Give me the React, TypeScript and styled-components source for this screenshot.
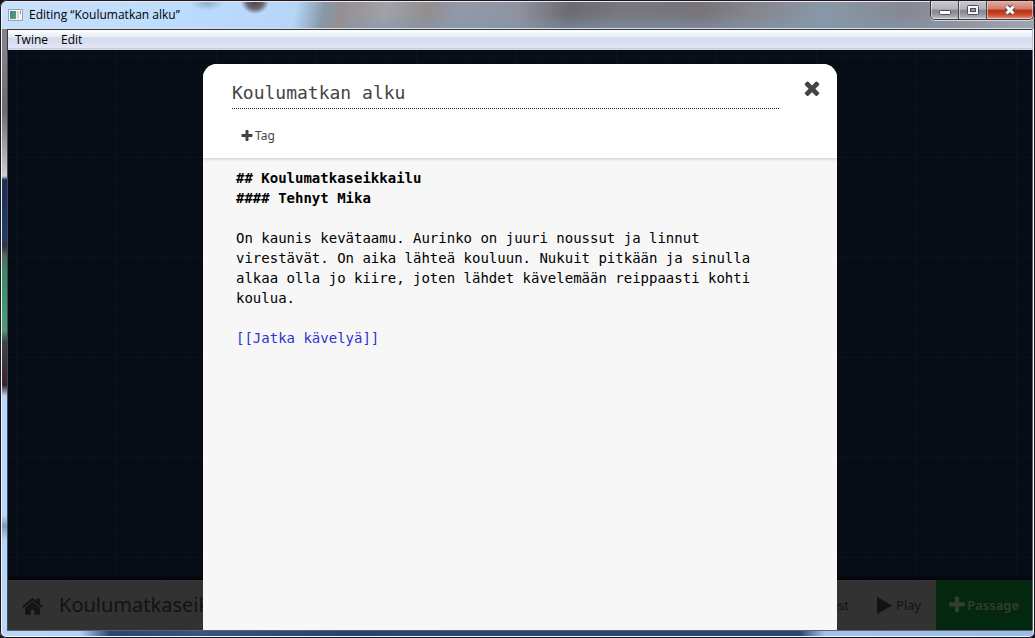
import React from 'react';
import styled, { createGlobalStyle } from 'styled-components';

const mono = `'DejaVu Sans Mono', 'Liberation Mono', monospace`;
const sans = `'Noto Sans', 'Open Sans', sans-serif`;

const GlobalStyle = createGlobalStyle`
  *, *::before, *::after { box-sizing: border-box; }
  body { margin: 0; font-family: ${sans}; background: #15121a; }
  button, input { font: inherit; color: inherit; }
  button { margin: 0; padding: 0; border: 0; background: none; cursor: pointer; }
`;

const WindowFrame = styled.div`
  display: flex;
  flex-direction: column;
  min-height: 100vh;
  padding: 1px 2px 8px 7px;
  border-radius: 7px 7px 6px 6px;
  box-shadow: inset 0 0 0 1px #1b1820, inset 0 0 0 2px #eef4fb;
  background:
    linear-gradient(90deg, #bbd8fa 0, #b4d2f6 80px, #2a4572 110px, #3a5382 200px, #284474 340px, #2c4674 800px, #a4c3ec 825px, #9bbce8 100%) bottom / 100% 8px no-repeat,
    linear-gradient(#858087 0, #858087 50px, #6d696f 110px, #d2cecd 176px, #1b2c50 180px, #233a6c 236px, #35343c 246px, #606560 256px, #3e8562 268px, #4d9c75 330px, #44404a 342px, #3a2526 385px, #b8d7fa 396px, #bbd9fb 515px, #8199b8 526px, #b5d4f8 540px, #bbd9fb 100%) left / 8px 100% no-repeat,
    linear-gradient(#9eaab8 0, #c9dce8 80px, #8078ae 98px, #c3d2df 130px, #eeebee 177px, #8fafd2 179px, #b6d2f1 400px, #bfdaf7 100%) right / 5px 100% no-repeat,
    #8d929f;
`;

const TitleBar = styled.header`
  display: flex;
  align-items: flex-start;
  height: 28px;
  margin: 0 -1px 0 -5px;
  padding-left: 6px;
  border-top: 1px solid #eee8ee;
  border-radius: 6px 6px 0 0;
  background:
    radial-gradient(ellipse 14px 12px at 253px 0, #514652 0, #6b616f 55%, transparent 100%),
    radial-gradient(ellipse 16px 8px at 205px 1px, #91adcb 0, transparent 100%),
    linear-gradient(transparent 40%, #8398ad88 100%) 345px 0 / 600px 100% no-repeat,
    linear-gradient(100deg, #c8e0fa 0, #bcdcfd 180px, #b7d6f7 290px, #8698ac 318px, #958f91 335px, #a1a2a9 380px, #918e8d 420px, #9299ab 450px, #8e939f 510px, #6c6971 560px, #77777f 610px, #77747a 690px, #85858c 740px, #8898a8 810px, #858993 890px, #a1a5b0 100%);
`;

const AppIcon = styled.svg`
  flex: none;
  width: 15px;
  height: 12px;
  margin: 7px 6px 0 0;
`;

const WindowTitle = styled.h1`
  flex: 1;
  margin: 4px 0 0;
  font: 400 12px/18px 'Open Sans', sans-serif;
  color: #000;
`;

const WindowControls = styled.div`
  display: flex;
  height: 19px;
  margin-top: -1px;
  border: 1px solid #35353d;
  border-top: 0;
  border-radius: 0 0 5px 5px;
  overflow: hidden;
  box-shadow: 0 1px 0 #d6d9e0;
`;

const ControlButton = styled.button<{ $close?: boolean }>`
  display: grid;
  place-items: center;
  width: ${p => (p.$close ? 46 : 28)}px;
  border: 1px solid #ffffff77;
  border-radius: ${p => (p.$close ? '0 0 4px 0' : '0')};
  background: ${p =>
    p.$close
      ? 'linear-gradient(#e0a79c 0, #cf7a6a 45%, #b8301a 50%, #c94125 75%, #e08061 100%)'
      : 'linear-gradient(#c6c5ca 0, #b1b1b7 45%, #85868f 50%, #91939e 75%, #b5b8c3 100%)'};
  & + & { box-shadow: -1px 0 0 #45434b; }
`;

const MenuBar = styled.nav`
  display: flex;
  height: 21px;
  margin-right: 1px;
  padding-left: 1px;
  border: solid #34373e;
  border-width: 1px 0 0 1px;
  box-shadow: 0 -1px 0 #d5e2ea;
  background: linear-gradient(#fff 0, #e6eaf4 7px, #d4daec 8px, #e2e7f6 18px, #b3b9cb 19px, #f5f6fb 20px);
`;

const MenuItem = styled.button`
  padding: 0 6px;
  margin-right: 1px;
  font: 400 12px/20px 'Open Sans', sans-serif;
  color: #000;
`;

const AppView = styled.main`
  position: relative;
  display: flex;
  flex: 1;
  flex-direction: column;
  margin-right: 1px;
  border-left: 1px solid #414a58;
  box-shadow: 1px 0 0 #59636f, 0 1px 0 #59636f;
`;

const StoryMap = styled.div`
  flex: 1;
  background:
    linear-gradient(transparent, #02050a) bottom / 100% 6px no-repeat,
    linear-gradient(90deg, #0a121c 1px, transparent 1px) 8px 0 / 100px 100px,
    linear-gradient(#0a121c 1px, transparent 1px) 0 7px / 100px 100px,
    linear-gradient(90deg, #070e18 1px, transparent 1px) 8px 0 / 25px 25px,
    linear-gradient(#070e18 1px, transparent 1px) 0 7px / 25px 25px,
    #060d17;
`;

const StoryToolbar = styled.footer`
  display: flex;
  align-items: stretch;
  height: 50px;
  background: #323232;
  color: #121212;
`;

const HomeLink = styled.a`
  display: flex;
  align-items: center;
  padding: 2px 15px 0 13px;
  color: #151515;
`;

const StoryName = styled.button`
  flex: 1;
  font: 400 20px/50px ${sans};
  text-align: left;
`;

const ToolButton = styled.button<{ $primary?: boolean }>`
  display: flex;
  align-items: center;
  gap: ${p => (p.$primary ? 0 : 2)}px;
  padding: 0 ${p => (p.$primary ? 13 : 15)}px 0 11px;
  font: ${p => (p.$primary ? 600 : 400)} 13px/50px ${sans};
  color: ${p => (p.$primary ? '#323d34' : '#121212')};
  background: ${p => (p.$primary ? '#04280f' : 'transparent')};
`;

const Overlay = styled.div`
  position: absolute;
  inset: 14px 0 0;
  display: flex;
  justify-content: center;
`;

const Dialog = styled.section`
  display: flex;
  flex-direction: column;
  width: 100%;
  max-width: 634px;
  border-radius: 14px 14px 0 0;
  overflow: hidden;
  background: #f7f7f7;
`;

const DialogHeader = styled.div`
  display: grid;
  grid-template-columns: 1fr 22px;
  column-gap: 22px;
  align-items: start;
  padding: 13px 14px 9px 29px;
  background: #fff;
  box-shadow: 0 1px 3px #00000033;
  color: #444;
`;

const PassageName = styled.input`
  width: 100%;
  height: 32px;
  padding: 0 0 1px;
  border: 0;
  border-bottom: 1px dotted #222;
  outline: 0;
  background: none;
  font: 400 18px/30px ${mono};
  color: #444;
`;

const CloseButton = styled.button`
  display: grid;
  height: 22px;
  color: #444;
`;

const TagButton = styled.button`
  display: flex;
  align-items: center;
  justify-self: start;
  gap: 1px;
  margin-top: 13px;
  padding-left: 8px;
  font: 400 12px/27px ${sans};
  color: #444;
`;

const PassageText = styled.div`
  flex: 1;
  padding: 10px 53px 20px 33px;
  outline: 0;
  font: 400 14px/20px ${mono};
  color: #000;
`;

const Line = styled.div`
  min-height: 20px;
`;

const Heading = styled(Line)`
  font-weight: 700;
`;

const PassageLink = styled.span`
  color: #3333cc;
`;

const shapes = {
  home: 'M1472 992v480q0 26-19 45t-45 19h-384v-384h-256v384h-384q-26 0-45-19t-19-45v-480q0-1 .5-3t.5-3l575-474 575 474q1 2 1 6zm223-69l-62 74q-8 9-21 11h-3q-13 0-21-7l-692-577-692 577q-12 8-24 7-13-2-21-11l-62-74q-8-10-7-23.5t11-21.5l719-599q32-26 76-26t76 26l244 204v-195q0-14 9-23t23-9h192q14 0 23 9t9 23v408l219 182q10 8 11 21.5t-7 23.5z',
  plus: 'M1600 736v192q0 40-28 68t-68 28h-416v416q0 40-28 68t-68 28h-192q-40 0-68-28t-28-68v-416h-416q-40 0-68-28t-28-68v-192q0-40 28-68t68-28h416v-416q0-40 28-68t68-28h192q40 0 68 28t28 68v416h416q40 0 68 28t28 68z',
  times: 'M1490 1322q0 40-28 68l-136 136q-28 28-68 28t-68-28l-294-294-294 294q-28 28-68 28t-68-28l-136-136q-28-28-28-68t28-68l294-294-294-294q-28-28-28-68t28-68l136-136q28-28 68-28t68 28l294 294 294-294q28-28 68-28t68 28l136 136q28 28 28 68t-28 68l-294 294 294 294q28 28 28 68z',
  play: 'M1576 927l-1328 738q-23 13-39.5 3t-16.5-36v-1472q0-26 16.5-36t39.5 3l1328 738q23 13 23 31t-23 31z',
};

function Icon({ name, size }: { name: keyof typeof shapes; size: number }) {
  return (
    <svg width={size} height={size} viewBox="0 0 1792 1792" fill="currentColor" aria-hidden="true">
      <path d={shapes[name]} />
    </svg>
  );
}

function ControlGlyph({ kind }: { kind: 'min' | 'max' | 'close' }) {
  return (
    <svg width="14" height="12" viewBox="0 0 14 12" aria-hidden="true">
      {kind === 'min' && <rect x="1.5" y="6.5" width="11" height="4" rx="1" fill="#fff" stroke="#4a4c5c" />}
      {kind === 'max' && (
        <>
          <rect x="1.5" y="1.5" width="11" height="9" rx="1" fill="#f5f5f5" stroke="#4a4c5c" />
          <rect x="4.5" y="4.5" width="5" height="3" fill="#96979f" stroke="#4a4c5c" />
        </>
      )}
      {kind === 'close' && (
        <>
          <path d="M3.5 2.5l7 7M10.5 2.5l-7 7" stroke="#4b4858" strokeWidth="5" />
          <path d="M3.5 2.5l7 7M10.5 2.5l-7 7" stroke="#fff" strokeWidth="3" />
        </>
      )}
    </svg>
  );
}

export default function App() {
  return (
    <>
      <GlobalStyle />
      <WindowFrame>
        <TitleBar>
          <AppIcon viewBox="0 0 15 12" aria-hidden="true">
            <defs>
              <linearGradient id="pane" x1="0" y1="0" x2="1" y2="1">
                <stop offset="0" stopColor="#4a78a8" />
                <stop offset="1" stopColor="#5aa878" />
              </linearGradient>
            </defs>
            <rect x=".5" y=".5" width="14" height="11" fill="#f3f4f5" stroke="#9ba3aa" />
            <rect x="2" y="2" width="6" height="8" fill="url(#pane)" />
            <rect x="9" y="2" width="2" height="8" fill="#d4d9dc" />
            <rect x="12" y="2" width="1" height="3" fill="#8595a2" />
          </AppIcon>
          <WindowTitle>Editing “Koulumatkan alku”</WindowTitle>
          <WindowControls>
            <ControlButton aria-label="Minimize"><ControlGlyph kind="min" /></ControlButton>
            <ControlButton aria-label="Maximize"><ControlGlyph kind="max" /></ControlButton>
            <ControlButton $close aria-label="Close window"><ControlGlyph kind="close" /></ControlButton>
          </WindowControls>
        </TitleBar>
        <MenuBar>
          <MenuItem>Twine</MenuItem>
          <MenuItem>Edit</MenuItem>
        </MenuBar>
        <AppView>
          <StoryMap />
          <StoryToolbar>
            <HomeLink href="#stories" aria-label="Stories"><Icon name="home" size={23} /></HomeLink>
            <StoryName>Koulumatkaseikkailu</StoryName>
            <ToolButton>Test</ToolButton>
            <ToolButton><Icon name="play" size={19} />Play</ToolButton>
            <ToolButton $primary><Icon name="plus" size={20} />Passage</ToolButton>
          </StoryToolbar>
          <Overlay>
            <Dialog role="dialog" aria-label="Passage editor">
              <DialogHeader>
                <PassageName aria-label="Passage name" defaultValue="Koulumatkan alku" spellCheck={false} />
                <CloseButton aria-label="Close"><Icon name="times" size={22} /></CloseButton>
                <TagButton><Icon name="plus" size={14} />Tag</TagButton>
              </DialogHeader>
              <PassageText
                role="textbox"
                aria-multiline="true"
                aria-label="Passage text"
                contentEditable
                suppressContentEditableWarning
                spellCheck={false}
              >
                <Heading>## Koulumatkaseikkailu</Heading>
                <Heading>#### Tehnyt Mika</Heading>
                <Line />
                <Line>
                  On kaunis kevätaamu. Aurinko on juuri noussut ja linnut virestävät. On aika lähteä kouluun.
                  Nukuit pitkään ja sinulla alkaa olla jo kiire, joten lähdet kävelemään reippaasti kohti koulua.
                </Line>
                <Line />
                <Line><PassageLink>[[Jatka kävelyä]]</PassageLink></Line>
              </PassageText>
            </Dialog>
          </Overlay>
        </AppView>
      </WindowFrame>
    </>
  );
}
